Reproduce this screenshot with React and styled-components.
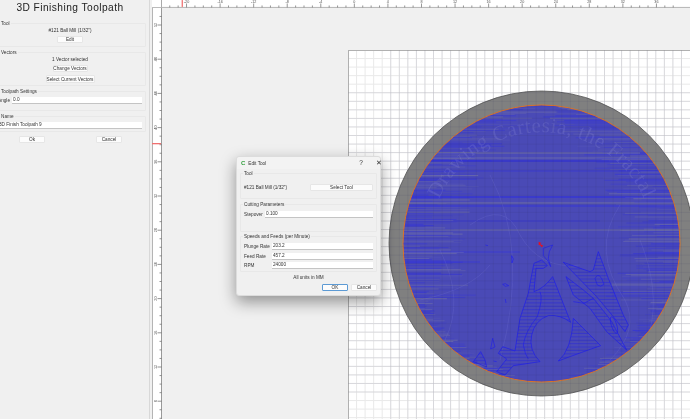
import React from 'react';
import styled, { createGlobalStyle } from 'styled-components';

const GlobalStyle = createGlobalStyle`
  html, body { margin: 0; padding: 0; background: #f0f0f0; }
  * { box-sizing: border-box; }
`;

const Page = styled.div`
  position: relative;
  display: flex;
  width: 690px;
  height: 419px;
  overflow: hidden;
  background: #f0f0f0;
  font-family: "Liberation Sans", Arial, sans-serif;
  font-size: 4.7px;
  color: #333;
  filter: blur(0.3px);
`;

/* ---------- left panel ---------- */
const SidePanel = styled.aside`
  flex: 0 0 150px;
  height: 100%;
  overflow: hidden;
  border-right: 1px solid #d8d8d8;
`;

const SideInner = styled.div`
  width: 152px;
  margin-left: -6px;
`;

const Title = styled.h1`
  margin: 0;
  height: 23px;
  padding-top: 1px;
  font-size: 10.2px;
  line-height: 14px;
  font-weight: 400;
  letter-spacing: 0.45px;
  text-align: center;
  color: #222;
`;

const Group = styled.section`
  display: flex;
  flex-direction: column;
  align-items: ${(p) => p.$align || 'stretch'};
  height: ${(p) => p.$h}px;
  margin-bottom: ${(p) => p.$after || 0}px;
  padding: 0 3px;
  border: 1px solid #e8e8e8;
  border-radius: 1px;
`;

const Legend = styled.div`
  align-self: flex-start;
  height: 6px;
  margin: -3px 0 0 ${(p) => p.$left ?? -1}px;
  padding: 0 1px;
  line-height: 6px;
  background: #f0f0f0;
  white-space: nowrap;
`;

const Note = styled.div`
  height: 6px;
  margin-top: ${(p) => p.$top || 0}px;
  line-height: 6px;
  text-align: center;
  white-space: nowrap;
`;

const Button = styled.div`
  display: flex;
  align-items: center;
  justify-content: center;
  flex: 0 0 auto;
  width: ${(p) => p.$w}px;
  height: ${(p) => p.$h || 7}px;
  margin-top: ${(p) => p.$top || 0}px;
  background: #fcfcfc;
  border: 1px solid ${(p) => (p.$primary ? '#5c9ad4' : '#e6e6e6')};
  border-radius: 1px;
  white-space: nowrap;
`;

const Field = styled.div`
  display: flex;
  align-items: center;
  gap: ${(p) => p.$gap || 1}px;
  height: 7px;
  margin-top: ${(p) => p.$top || 0}px;
  white-space: nowrap;
`;

const FieldLabel = styled.span`
  flex: 0 0 ${(p) => p.$w}px;
`;

const Input = styled.div`
  flex: 1;
  height: 7px;
  padding: 0 1px;
  line-height: 6px;
  background: #fff;
  border-bottom: 1px solid #c4c4c4;
`;

const SideActions = styled.div`
  display: flex;
  justify-content: space-between;
  margin-top: 4px;
  padding: 0 24px 0 25px;
`;

/* ---------- workspace ---------- */
const Workspace = styled.main`
  flex: 1;
  display: grid;
  grid-template-columns: 10px 1fr;
  grid-template-rows: 8px 1fr;
  margin-left: 2px;
  min-width: 0;
`;

const Corner = styled.div`
  background: #fff;
  border-right: 1px solid #aaa;
  border-bottom: 1px solid #bbb;
`;

const RulerSvg = styled.svg`
  display: block;
  background: #fff;
  font-family: "Liberation Sans", Arial, sans-serif;
`;

const Canvas = styled.div`
  padding: 42px 0 0 186px;
  overflow: hidden;
  background: #f0f0f0;
`;

const SheetSvg = styled.svg`
  display: block;
  background: #fff;
`;

/* ---------- dialog ---------- */
const Dialog = styled.div`
  position: absolute;
  left: 236px;
  top: 156px;
  display: flex;
  flex-direction: column;
  width: 145px;
  height: 140px;
  background: #f0f0f0;
  border: 1px solid #dcdcdc;
  border-radius: 3px;
  box-shadow: 0 6px 16px rgba(0, 0, 0, 0.4);
`;

const TitleBar = styled.div`
  display: flex;
  align-items: center;
  height: 12px;
  padding: 0 5px 0 4px;
  background: #f3f3f3;
  border-radius: 3px 3px 0 0;
  white-space: nowrap;
`;

const AppMark = styled.span`
  margin-right: 3px;
  font-size: 6px;
  font-weight: 700;
  color: #2f9e3a;
`;

const WindowGlyph = styled.span`
  margin-left: ${(p) => p.$left}px;
  font-size: 6.5px;
  line-height: 1;
`;

const DialogBody = styled.div`
  display: flex;
  flex-direction: column;
  padding: 4px 3px 0 3px;
`;

const SplitRow = styled.div`
  display: flex;
  align-items: center;
  justify-content: space-between;
  height: 7px;
  margin-top: 7px;
`;

const DialogActions = styled.div`
  display: flex;
  justify-content: flex-end;
  gap: 3px;
  margin-top: 3px;
`;

/* ---------- data for the rulers and the drawing ---------- */
const STEP = 8.55;
const SHEET_X = 348;
const SHEET_Y = 50;
const CX = 541.5;
const CY = 243.5;
const RI = 138.5;
const RO = 152.5;

function seeded(seed) {
  let s = seed;
  return () => {
    s = (s * 16807) % 2147483647;
    return (s - 1) / 2147483646;
  };
}

const rand = seeded(4211);
const tonesEdge = ['#3030e6', '#7070a8', '#2828ea', '#8888a0', '#3c3cd4', '#5858b8'];
const toolRows = [];
for (let y = CY - RI + 1; y < CY + RI; y += 1.22) {
  const half = Math.sqrt(RI * RI - (y - CY) * (y - CY));
  const upper = y < 300;
  const lenL = (upper ? 14 + rand() * 50 : 5 + rand() * 14) * (half > 40 ? 1 : 0.4);
  const lenR = (upper ? 14 + rand() * 50 : 5 + rand() * 14) * (half > 40 ? 1 : 0.4);
  toolRows.push({
    y,
    x1: CX - half,
    x2: CX + half,
    lenL,
    lenR,
    toneL: tonesEdge[Math.floor(rand() * tonesEdge.length)],
    toneR: tonesEdge[Math.floor(rand() * tonesEdge.length)],
    opacity: 0.25 + rand() * 0.45,
  });
}

const streaks = [
  { y: 153, x1: 425, x2: 640, c: '#8a8a9a', w: 0.6 },
  { y: 158, x1: 415, x2: 655, c: '#7c7ca8', w: 0.6 },
  { y: 161, x1: 415, x2: 660, c: '#2424ee', w: 0.8 },
  { y: 171, x1: 410, x2: 670, c: '#3030e0', w: 0.6 },
  { y: 197, x1: 407, x2: 676, c: '#2424ee', w: 0.8 },
  { y: 203, x1: 406, x2: 676, c: '#8a8a98', w: 0.6 },
  { y: 206, x1: 406, x2: 677, c: '#2c2ce8', w: 0.7 },
  { y: 221, x1: 404, x2: 600, c: '#3030e0', w: 0.6 },
  { y: 230, x1: 404, x2: 679, c: '#7d7da0', w: 0.7 },
  { y: 252, x1: 404, x2: 520, c: '#3030e4', w: 0.6 },
  { y: 262, x1: 406, x2: 480, c: '#3030e4', w: 0.6 },
];

// traced in crop units (3x, origin 460,235)
const hatched = [
  'M278 125 L332 262 Q300 238 265 242 Q225 255 215 300 Q205 345 240 380 L160 392 L135 420 L110 410 L140 372 L115 355 L128 335 L165 348 L180 250 L205 175 L213 130 L222 85 L245 75 L262 92 L250 100 L228 100 L222 170 Q252 160 278 125 Z',
  'M340 250 L422 332 Q370 350 295 378 Q335 345 340 250 Z',
  'M415 50 L445 130 L490 240 L505 270 L495 290 L460 245 L410 185 L310 82 L390 110 L400 105 Z',
  'M318 125 L370 165 L400 190 L440 240 L455 260 L500 345 L440 290 L390 220 L340 180 Z',
  'M62 350 L40 380 L80 396 L75 375 Z',
].join(' ');

const outlines = [
  'M240 170 Q250 190 232 245 Q195 290 190 330 Q195 360 205 372',
  'M250 40 L278 30 L268 50 L265 70 L272 95 L264 78 L250 62 Z',
  'M98 310 L92 342 L105 336 Z',
  'M155 62 L160 72 L156 84 Z',
  'M128 148 L136 146 L146 152 L136 154 Z',
  'M136 192 L138 204',
  'M76 30 L84 32',
  'M100 378 L110 380',
  'M405 130 Q418 105 432 148 Q422 158 412 150 Z',
  'M340 200 L372 205 L400 190',
];

function Ruler({ horizontal, length }) {
  const ticks = [];
  const start = horizontal ? SHEET_X : 25;
  const from = horizontal ? 152 : 8;
  const first = Math.ceil((from - start) / STEP);
  const last = Math.floor((length + from - start) / STEP);
  for (let k = first; k <= last; k++) {
    const p = start + k * STEP;
    const major = k % 4 === 0;
    const size = major ? 4 : 2;
    if (horizontal) {
      ticks.push(<line key={k} x1={p} x2={p} y1={7.5 - size} y2={7.5} stroke="#666" strokeWidth="0.7" />);
      if (major) {
        ticks.push(
          <text key={`l${k}`} x={p} y="3" fontSize="3.8" textAnchor="middle" fill="#555">
            {k}
          </text>
        );
      }
    } else {
      ticks.push(<line key={k} x1={161.5 - size} x2={161.5} y1={p} y2={p} stroke="#666" strokeWidth="0.7" />);
      if (major) {
        ticks.push(
          <text key={`l${k}`} fontSize="3.8" textAnchor="middle" fill="#555" transform={`translate(156.5 ${p}) rotate(-90)`}>
            {52 - k}
          </text>
        );
      }
    }
  }
  return horizontal ? (
    <RulerSvg width={length} height="8" viewBox="152 0 538 8">
      <line x1="152" x2="690" y1="7.5" y2="7.5" stroke="#b4b4b4" />
      {ticks}
      <rect x="172" y="0" width="1.3" height="7" fill="#f07070" />
    </RulerSvg>
  ) : (
    <RulerSvg width="10" height={length} viewBox="152 8 10 411">
      <line x1="152.5" x2="152.5" y1="8" y2="419" stroke="#b4b4b4" />
      <line x1="161.5" x2="161.5" y1="8" y2="419" stroke="#999" />
      {ticks}
      <rect x="152" y="143" width="9" height="1.3" fill="#f07070" />
    </RulerSvg>
  );
}

function Drawing() {
  const vLines = [];
  const hLines = [];
  for (let k = 0; k * STEP < 342; k++) {
    const x = SHEET_X + k * STEP;
    vLines.push(<line key={k} x1={x} x2={x} y1={SHEET_Y} y2="419" />);
  }
  for (let k = 0; k * STEP < 369; k++) {
    const y = SHEET_Y + k * STEP;
    hLines.push(<line key={k} x1={SHEET_X} x2="690" y1={y} y2={y} />);
  }
  const hatchLines = [];
  for (let y = 20; y < 430; y += 10.2) {
    hatchLines.push(<line key={y} x1="0" x2="520" y1={y} y2={y} />);
  }
  return (
    <SheetSvg width="342" height="369" viewBox="348 50 342 369">
      <defs>
        <clipPath id="tool-area">
          <circle cx={CX} cy={CY} r={RI} />
        </clipPath>
        <clipPath id="hatch-area">
          <path d={hatched} />
        </clipPath>
        <path id="text-arc" d={`M ${CX - 95} ${CY + 60} A 112 112 0 1 1 ${CX + 95} ${CY + 60}`} />
      </defs>

      <g stroke="#e9e9e9" strokeWidth="1">
        {vLines}
        {hLines}
      </g>
      <line x1="348.5" x2="348.5" y1="50" y2="419" stroke="#b0b0b0" />
      <line x1="348" x2="690" y1="50.5" y2="50.5" stroke="#b0b0b0" />

      <circle cx={CX} cy={CY} r={RO} fill="#808080" stroke="#505050" strokeWidth="0.8" />
      <circle cx={CX} cy={CY} r={RI} fill="#4a4ab6" />

      <g clipPath="url(#tool-area)">
        {toolRows.map((r, i) => (
          <g key={i} strokeWidth="0.7" strokeOpacity={r.opacity}>
            <line x1={r.x1} x2={r.x1 + r.lenL} y1={r.y} y2={r.y} stroke={r.toneL} />
            <line x1={r.x2 - r.lenR} x2={r.x2} y1={r.y} y2={r.y} stroke={r.toneR} />
          </g>
        ))}
        {streaks.map((s) => (
          <line key={s.y} x1={s.x1} x2={s.x2} y1={s.y} y2={s.y} stroke={s.c} strokeWidth={s.w} />
        ))}
        <text fontFamily='"Liberation Serif", serif' fontSize="21" letterSpacing="0.4" fill="#8f8fd8" fillOpacity="0.24">
          <textPath href="#text-arc" startOffset="50%" textAnchor="middle">
            Drawing Cartesia, the Fractal
          </textPath>
        </text>
        <g fill="none" stroke="#7676d4" strokeOpacity="0.3" strokeWidth="0.8">
          <path d="M470 225 Q505 200 520 235 Q540 270 580 265" />
          <path d="M490 175 Q530 250 500 360" />
          <path d="M620 205 Q590 250 625 300 Q640 330 610 360" />
          <path d="M440 250 Q465 300 445 340" />
          <path d="M420 300 Q470 290 490 265" />
          <path d="M640 240 Q660 290 650 330" />
        </g>
      </g>

      <g transform="translate(460 235) scale(0.3333)">
        <g clipPath="url(#hatch-area)" stroke="#2a2ad8" strokeWidth="1.7">
          {hatchLines}
        </g>
        <path d={hatched} fill="none" stroke="#1c1cec" strokeWidth="2" strokeLinejoin="round" />
        <g fill="none" stroke="#1c1cec" strokeWidth="1.8">
          {outlines.map((d) => (
            <path key={d} d={d} />
          ))}
          <ellipse cx="462" cy="270" rx="8" ry="26" transform="rotate(-18 462 270)" />
        </g>
        <path d="M236 20 L244 24 L240 27 L250 32 L245 37 L240 30 L236 31 Z" fill="#e81020" />
      </g>

      <circle cx={CX} cy={CY} r={RI} fill="none" stroke="#e8741c" strokeWidth="0.9" />
      <g stroke="#303060" strokeOpacity="0.12" strokeWidth="0.8">
        {vLines.filter((_, k) => Math.abs(SHEET_X + k * STEP - CX) < RO)}
        {hLines.filter((_, k) => Math.abs(SHEET_Y + k * STEP - CY) < RO)}
      </g>
    </SheetSvg>
  );
}

export default function App() {
  return (
    <>
      <GlobalStyle />
      <Page>
        <SidePanel>
          <SideInner>
            <Title>3D Finishing Toolpath</Title>

            <Group $h={24} $after={5} $align="center">
              <Legend $left={2}>Tool</Legend>
              <Note $top={1}>#121 Ball Mill (1/32")</Note>
              <Button $w={26} $top={2}>Edit</Button>
            </Group>

            <Group $h={34} $after={5} $align="center">
              <Legend $left={2}>Vectors</Legend>
              <Note $top={1}>1 Vector selected</Note>
              <Button $w={35} $top={2}>Change Vectors</Button>
              <Button $w={49} $h={8} $top={3}>Select Current Vectors</Button>
            </Group>

            <Group $h={20} $after={5}>
              <Legend $left={2}>Toolpath Settings</Legend>
              <Field $top={2} $gap={2}>
                <FieldLabel $w={12}>Angle</FieldLabel>
                <Input>0.0</Input>
              </Field>
            </Group>

            <Group $h={16}>
              <Legend $left={2}>Name</Legend>
              <Field $top={2}>
                <Input>3D Finish Toolpath 9</Input>
              </Field>
            </Group>

            <SideActions>
              <Button $w={26}>Ok</Button>
              <Button $w={26}>Cancel</Button>
            </SideActions>
          </SideInner>
        </SidePanel>

        <Workspace>
          <Corner />
          <Ruler horizontal length={528} />
          <Ruler length={411} />
          <Canvas>
            <Drawing />
          </Canvas>
        </Workspace>

        <Dialog>
          <TitleBar>
            <AppMark>C</AppMark>
            Edit Tool
            <WindowGlyph $left={93}>?</WindowGlyph>
            <WindowGlyph $left={13}>✕</WindowGlyph>
          </TitleBar>
          <DialogBody>
            <Group $h={26} $after={5}>
              <Legend>Tool</Legend>
              <SplitRow>
                <span>#121 Ball Mill (1/32")</span>
                <Button $w={63}>Select Tool</Button>
              </SplitRow>
            </Group>
            <Group $h={28} $after={4}>
              <Legend>Cutting Parameters</Legend>
              <Field $top={3} $gap={0}>
                <FieldLabel $w={20}>Stepover</FieldLabel>
                <Input>0.100</Input>
              </Field>
            </Group>
            <Group $h={36}>
              <Legend>Speeds and Feeds (per Minute)</Legend>
              <Field $top={3} $gap={0}>
                <FieldLabel $w={27}>Plunge Rate</FieldLabel>
                <Input>203.2</Input>
              </Field>
              <Field $top={2.5} $gap={0}>
                <FieldLabel $w={27}>Feed Rate</FieldLabel>
                <Input>457.2</Input>
              </Field>
              <Field $top={2.5} $gap={0}>
                <FieldLabel $w={27}>RPM</FieldLabel>
                <Input>24000</Input>
              </Field>
            </Group>
            <Note $top={3}>All units in MM</Note>
            <DialogActions>
              <Button $w={26} $primary>OK</Button>
              <Button $w={26}>Cancel</Button>
            </DialogActions>
          </DialogBody>
        </Dialog>
      </Page>
    </>
  );
}
